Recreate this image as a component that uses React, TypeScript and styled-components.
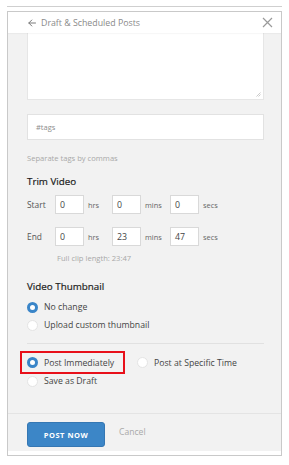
import React from 'react'
import styled, { createGlobalStyle } from 'styled-components'

const GlobalStyle = createGlobalStyle`
  html, body {
    margin: 0;
    padding: 0;
    background: #ffffff;
    font-family: "Open Sans", Lato, Arial, sans-serif;
  }
  * { box-sizing: border-box; }
`

const Page = styled.div`
  width: 289px;
  height: 465px;
  padding: 6px 0 0 7px;
`

const TopRule = styled.div`
  width: 275px;
  height: 1px;
  background: #cfcfcf;
  margin-bottom: 4px;
`

const Frame = styled.div`
  width: 275px;
  height: 445px;
  border: 1px solid #c9c9c9;
  background: #ffffff;
  display: flex;
  flex-direction: column;
`

const Header = styled.div`
  height: 21px;
  flex-shrink: 0;
  display: flex;
  align-items: center;
  padding: 0 8px 0 20px;
  background: #ffffff;
  color: #8a8a8a;
  font-size: 8.8px;
  position: relative;
  z-index: 1;
  box-shadow: 0 1px 1px rgba(0, 0, 0, 0.03);
`

const Title = styled.span`
  margin-left: 5px;
  flex: 1;
`

const Body = styled.div`
  flex: 1;
  background: #f2f2f2;
  padding: 0 17px 0 19px;
  overflow: hidden;
  display: flex;
  flex-direction: column;
`

const TextArea = styled.div`
  height: 67px;
  background: #ffffff;
  border: 1px solid #e6e6e6;
  border-top: none;
  position: relative;
`

const Grip = styled.svg`
  position: absolute;
  right: 2px;
  bottom: 2px;
`

const TagsInput = styled.div`
  margin-top: 14px;
  height: 26px;
  background: #ffffff;
  border: 1px solid #e2e2e2;
  display: flex;
  align-items: center;
  padding-left: 8px;
  font-size: 7.5px;
  color: #8d8d8d;
`

const Hint = styled.div<{ $top: number; $indent?: number }>`
  margin-top: ${p => p.$top}px;
  margin-left: ${p => p.$indent ?? 0}px;
  font-size: 7.6px;
  line-height: 10px;
  color: #a8a8a8;
`

const SectionTitle = styled.div<{ $top: number }>`
  margin-top: ${p => p.$top}px;
  font-size: 9.8px;
  line-height: 14px;
  color: #1c1c1c;
  font-weight: 500;
  -webkit-text-stroke: 0.2px #1c1c1c;
`

const TimeRow = styled.div<{ $top: number }>`
  margin-top: ${p => p.$top}px;
  height: 19px;
  display: flex;
  align-items: center;
  font-size: 8.4px;
  color: #555555;
`

const RowLabel = styled.span`
  width: 28px;
`

const TimeBox = styled.div`
  width: 29px;
  height: 19px;
  background: #ffffff;
  border: 1px solid #d9d9d9;
  display: flex;
  align-items: center;
  padding-left: 4px;
  font-size: 8.8px;
  color: #444444;
`

const Unit = styled.span<{ $w: number }>`
  width: ${p => p.$w}px;
  padding-left: 4px;
  font-size: 7.4px;
  color: #666666;
`

const RadioRow = styled.div<{ $top?: number }>`
  margin-top: ${p => p.$top ?? 0}px;
  display: flex;
  align-items: center;
`

const Option = styled.label`
  height: 14px;
  display: flex;
  align-items: center;
  gap: 6px;
  font-size: 8.7px;
  color: #444444;
  white-space: nowrap;
`

const Radio = styled.span<{ $on?: boolean }>`
  width: 11px;
  height: 11px;
  flex-shrink: 0;
  border-radius: 50%;
  background: #ffffff;
  border: ${p => (p.$on ? '3px solid #3a85c8' : '1px solid #e4e4e4')};
`

const Highlight = styled.div`
  margin-left: -7px;
  height: 23px;
  width: 105px;
  border: 2px solid #e8101a;
  padding-left: 5px;
  display: flex;
  align-items: center;
  margin-right: 12px;
`

const Divider = styled.div`
  margin-top: 11px;
  height: 1px;
  background: #e1e1e1;
`

const Footer = styled.div`
  height: 38px;
  flex-shrink: 0;
  background: #f2f2f2;
  border-top: 1px solid #e4e4e4;
  padding: 8px 0 0 19px;
  display: flex;
  align-items: flex-start;
  gap: 14px;
  margin-bottom: 4px;
`

const PostButton = styled.button`
  width: 78px;
  height: 25px;
  border: 1px solid #3577b3;
  border-radius: 3px;
  background: #3c86c7;
  color: #ffffff;
  font-family: inherit;
  font-size: 7.5px;
  font-weight: 700;
  letter-spacing: 0.5px;
  padding: 0;
`

const CancelLink = styled.span`
  margin-top: 4px;
  font-size: 8.6px;
  color: #a9a9a9;
`

function Back() {
  return (
    <svg width="8" height="8" viewBox="0 0 8 8" fill="none" stroke="#7a7a7a" strokeWidth="1" strokeLinecap="round">
      <path d="M7.5 4H0.8M3.8 1L0.8 4l3 3" />
    </svg>
  )
}

function Close() {
  return (
    <svg width="11" height="11" viewBox="0 0 11 11" stroke="#9a9a9a" strokeWidth="1.2">
      <path d="M1 1l9 9M10 1l-9 9" />
    </svg>
  )
}

export default function App() {
  return (
    <Page>
      <GlobalStyle />
      <TopRule />
      <Frame>
        <Header>
          <Back />
          <Title>Draft &amp; Scheduled Posts</Title>
          <Close />
        </Header>
        <Body>
          <TextArea>
            <Grip width="5" height="5" viewBox="0 0 5 5" stroke="#b5b5b5" strokeWidth="0.7">
              <path d="M0.5 4.5L4.5 0.5M2.5 4.5L4.5 2.5" />
            </Grip>
          </TextArea>
          <TagsInput>#tags</TagsInput>
          <Hint $top={13}>Separate tags by commas</Hint>
          <SectionTitle $top={12}>Trim Video</SectionTitle>
          <TimeRow $top={6}>
            <RowLabel>Start</RowLabel>
            <TimeBox>0</TimeBox>
            <Unit $w={28}>hrs</Unit>
            <TimeBox>0</TimeBox>
            <Unit $w={29}>mins</Unit>
            <TimeBox>0</TimeBox>
            <Unit $w={30}>secs</Unit>
          </TimeRow>
          <TimeRow $top={13}>
            <RowLabel>End</RowLabel>
            <TimeBox>0</TimeBox>
            <Unit $w={28}>hrs</Unit>
            <TimeBox>23</TimeBox>
            <Unit $w={29}>mins</Unit>
            <TimeBox>47</TimeBox>
            <Unit $w={30}>secs</Unit>
          </TimeRow>
          <Hint $top={7} $indent={30}>Full clip length: 23:47</Hint>
          <SectionTitle $top={17}>Video Thumbnail</SectionTitle>
          <RadioRow $top={6}>
            <Option><Radio $on />No change</Option>
          </RadioRow>
          <RadioRow $top={4}>
            <Option><Radio />Upload custom thumbnail</Option>
          </RadioRow>
          <Divider />
          <RadioRow $top={7}>
            <Highlight>
              <Option><Radio $on />Post Immediately</Option>
            </Highlight>
            <Option><Radio />Post at Specific Time</Option>
          </RadioRow>
          <RadioRow>
            <Option><Radio />Save as Draft</Option>
          </RadioRow>
        </Body>
        <Footer>
          <PostButton>POST NOW</PostButton>
          <CancelLink>Cancel</CancelLink>
        </Footer>
      </Frame>
    </Page>
  )
}
